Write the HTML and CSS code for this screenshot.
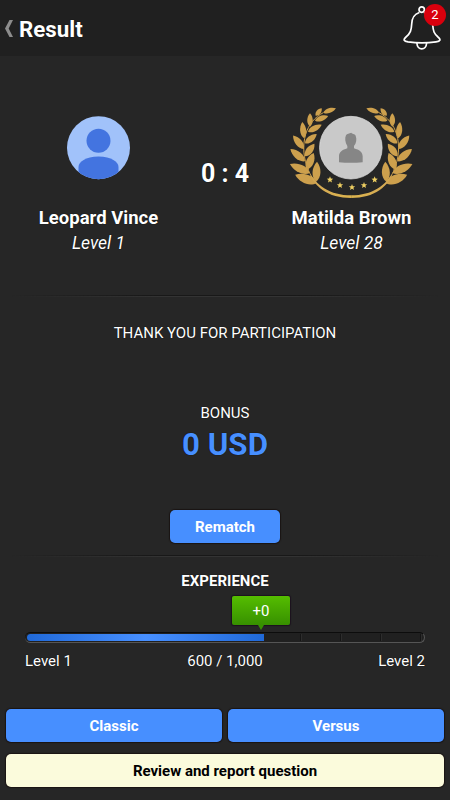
FILE: index.html
```html
<!DOCTYPE html>
<html lang="en">

<head>
    <meta charset="UTF-8">
    <meta name="viewport" content="width=device-width, initial-scale=1">
    <title>Result</title>
    <link rel="stylesheet" href="styles.css">
</head>

<body>
    <header class="header">
        <svg class="back" viewBox="0 0 9 18">
            <path d="M5.500 0H9L4.700 8.500 9 17H5.500L1 8.500z" fill="#8c8c8c"/>
        </svg>
        <h1 class="title">Result</h1>
        <div class="bell">
            <svg width="40" height="46" viewBox="0 0 40 46" fill="none" stroke="#fff" stroke-width="1.700">
                <circle cx="18.700" cy="5.600" r="2.700"/>
                <path d="M16.300 8.500C10 10.500 9 15 8.700 20C8.400 26 7.500 29.500 3 33C-.3 35.800 1 37.200 5 37.900C13 39.100 25 39.100 33 37.900C37.500 37.200 38.200 35.500 35 33C31 29.600 30.200 27 29.700 21C29.300 14.500 27 10.500 21 8.500"/>
                <path d="M13.900 39c.2 7.700 9.500 7.700 9.700 0"/>
            </svg>
            <span class="badge">2</span>
        </div>
    </header>

    <section class="players">
        <div class="player">
            <svg class="portrait" viewBox="0 0 145 110">
                <clipPath id="face"><circle cx="72.500" cy="52.700" r="31.500"/></clipPath>
                <g clip-path="url(#face)">
                    <path fill="#a1c2fa" d="M40 20h65v65H40z"/>
                    <circle cx="72.500" cy="45.800" r="12" fill="#4374e0"/>
                    <path fill="#4374e0" d="M52.500 90V72c0-5 7-10.500 20-10.500S92.500 67 92.500 72v18z"/>
                </g>
            </svg>
            <div class="name">Leopard Vince</div>
            <div class="level">Level 1</div>
        </div>
        <div class="score">0 : 4</div>
        <div class="player">
            <svg class="portrait" viewBox="-3 0 435 330">
                <defs>
                    <linearGradient id="gold" gradientUnits="userSpaceOnUse" x1="30" y1="0" x2="213" y2="0">
                        <stop offset="0" stop-color="#bd913f"/>
                        <stop offset=".45" stop-color="#d5aa54"/>
                        <stop offset="1" stop-color="#dcb44e"/>
                    </linearGradient>
                    <path id="leaf" d="M0 0C.22 -.62 .7 -.6 1 0C.7 .6 .22 .62 0 0z"/>
                    <path id="star" d="M0 -10 2.600 -3.400 9.500 -3 4.200 1.400 6 8.200 0 4.400 -6 8.200 -4.200 1.400 -9.500 -3 -2.600 -3.400z"/>
                    <g id="branch">
                        <g fill="#cda04d">
                            <use href="#leaf" transform="translate(130 53) rotate(-19) scale(40 16)"/>
                            <use href="#leaf" transform="translate(107 62) rotate(-51) scale(29 15)"/>
                            <use href="#leaf" transform="translate(105 77) rotate(-20) scale(42 17)"/>
                            <use href="#leaf" transform="translate(90 95) rotate(-90) scale(40 18)"/>
                            <use href="#leaf" transform="translate(84 110) rotate(-27) scale(46 19)"/>
                            <use href="#leaf" transform="translate(72 130) rotate(-96) scale(49 20)"/>
                            <use href="#leaf" transform="translate(75 145) rotate(-39) scale(45 20)"/>
                            <use href="#leaf" transform="translate(72 162) rotate(-129) scale(52 22)"/>
                            <use href="#leaf" transform="translate(75 184) rotate(-53) scale(47 22)"/>
                            <use href="#leaf" transform="translate(75 199) rotate(-140) scale(57 24)"/>
                            <use href="#leaf" transform="translate(80 224) rotate(-67) scale(54 25)"/>
                            <use href="#leaf" transform="translate(90 234) rotate(-156) scale(66 26)"/>
                            <use href="#leaf" transform="translate(108 260) rotate(-87) scale(60 26)"/>
                            <use href="#leaf" transform="translate(110 264) rotate(-159) scale(69 30)"/>
                        </g>
                        <path d="M130 53C105 66 86 88 77 118C67 152 70 191 86 226" fill="none" stroke="#c99c49" stroke-width="3"/>
                        <path d="M84 222C107 273 151 301 213.500 301V309C145 309 99 276 84 222z" fill="url(#gold)"/>
                    </g>
                </defs>
                <use href="#branch"/>
                <use href="#branch" transform="translate(427 0) scale(-1 1)"/>
                <g fill="#efcf62">
                    <use href="#star" x="150" y="254"/>
                    <use href="#star" x="180" y="271"/>
                    <use href="#star" x="216" y="277"/>
                    <use href="#star" x="252" y="271"/>
                    <use href="#star" x="284" y="254"/>
                </g>
                <circle cx="212.500" cy="158" r="94" fill="#c9c9c9" stroke="#e2e2e2" stroke-width="2"/>
                <path fill="#868686" d="M177 202V184C177 171 187 165 202 160V153C195 143 194 129 198 121C201 115 208 116 214 113C216 118 224 115 227 122C231 132 229 145 222 153V160C238 165 248 171 248 184V202Q212 205 177 202z"/>
            </svg>
            <div class="name">Matilda Brown</div>
            <div class="level">Level 28</div>
        </div>
    </section>

    <div class="line"></div>
    <p class="thanks">THANK YOU FOR PARTICIPATION</p>

    <section class="bonus">
        <div class="bonus-label">BONUS</div>
        <div class="bonus-value">0 USD</div>
        <button class="btn rematch">Rematch</button>
    </section>

    <div class="line"></div>
    <section class="experience">
        <h2 class="exp-title">EXPERIENCE</h2>
        <div class="track">
            <div class="fill" style="width: 60%">
                <span class="gain">+0</span>
            </div>
            <div class="ticks"></div>
        </div>
        <div class="exp-labels">
            <span>Level 1</span>
            <span>600 / 1,000</span>
            <span>Level 2</span>
        </div>
    </section>

    <footer class="actions">
        <button class="btn">Classic</button>
        <button class="btn">Versus</button>
        <button class="btn report">Review and report question</button>
    </footer>
</body>

</html>
```

FILE: styles.css
```css
* {
    box-sizing: border-box;
}

body {
    margin: 0;
    height: 800px;
    display: flex;
    flex-direction: column;
    overflow: hidden;
    background-color: #262626;
    color: #fff;
    font-family: Roboto, "Liberation Sans", sans-serif;
    font-size: 15px;
    text-shadow: 0 0 1px #000;
}

.header {
    height: 56px;
    flex: none;
    display: flex;
    align-items: center;
    padding: 2px 4px 0;
    background-color: #202020;
}

.back {
    width: 9px;
    height: 18px;
}

.title {
    flex: 1;
    margin: 0 0 0 6px;
    font-size: 22.300px;
    line-height: 28px;
    font-weight: 700;
}

.bell {
    position: relative;
    width: 43px;
    height: 46px;
    margin-bottom: 4px;
}

.bell svg {
    display: block;
}

.badge {
    position: absolute;
    top: 0;
    right: 0;
    width: 22px;
    height: 22px;
    border-radius: 50%;
    background-color: #d9000d;
    font-size: 13px;
    line-height: 22px;
    text-align: center;
    text-shadow: none;
}

.players {
    height: 239px;
    flex: none;
    display: flex;
    justify-content: space-between;
    padding: 39px 26px 0;
}

.player {
    width: 145px;
    text-align: center;
}

.portrait {
    display: block;
    width: 145px;
    height: 110px;
}

.name {
    margin-top: 1px;
    font-size: 18.500px;
    line-height: 24px;
    font-weight: 700;
    white-space: nowrap;
}

.level {
    font-size: 17.500px;
    line-height: 26px;
    font-style: italic;
}

.score {
    margin-top: 64px;
    font-size: 25px;
    line-height: 30px;
    font-weight: 700;
}

.line {
    height: 2px;
    flex: none;
    margin: 0 12px;
    background: linear-gradient(#181818 50%, #333 50%);
    -webkit-mask-image: linear-gradient(90deg, transparent, #000 35%, #000 65%, transparent);
    mask-image: linear-gradient(90deg, transparent, #000 35%, #000 65%, transparent);
}

.thanks {
    margin: 26px 0 0;
    line-height: 20px;
    text-align: center;
}

.bonus {
    height: 212px;
    flex: none;
    padding-top: 60px;
    display: flex;
    flex-direction: column;
    align-items: center;
}

.bonus-label {
    line-height: 20px;
}

.bonus-value {
    margin-top: 2px;
    color: #478fff;
    font-size: 31.300px;
    line-height: 40px;
    font-weight: 700;
}

.btn {
    height: 33px;
    padding: 0;
    border: none;
    border-radius: 5px;
    background-color: #478fff;
    box-shadow: 0 0 1px 1px #1a1413;
    color: #fff;
    font-family: inherit;
    font-size: 15px;
    font-weight: 700;
    cursor: pointer;
}

.rematch {
    width: 110px;
    margin-top: 45px;
}

.experience {
    padding: 14px 25px 0;
}

.exp-title {
    margin: 0;
    font-size: 15px;
    line-height: 20px;
    text-align: center;
}

.track {
    display: flex;
    height: 11px;
    margin-top: 41px;
    padding: 1px 2px;
    border-radius: 6px;
    background-color: #202020;
    border-top: 1px solid #0c0c0c;
    border-bottom: 1px solid #555;
    border-right: 1px solid #555;
}

.fill {
    position: relative;
    height: 7px;
    border-radius: 4px 0 0 4px;
    background: linear-gradient(90deg, #2069d8, #478fff 50%, #2069d8);
}

.ticks {
    flex: 1;
    background: repeating-linear-gradient(90deg, transparent 0 36px, #151515 36px 37px, #2d2d2d 37px 38px, transparent 38px 40px);
}

.gain {
    position: absolute;
    right: -26px;
    bottom: 16px;
    width: 58px;
    height: 29px;
    border-radius: 2px;
    background: linear-gradient(#55bd00, #379000);
    box-shadow: 0 0 1px 1px #1c121f;
    line-height: 30px;
    text-align: center;
    text-shadow: none;
}

.gain::after {
    content: "";
    position: absolute;
    top: 100%;
    left: 26px;
    border: 3px solid transparent;
    border-top: 5px solid #379000;
    border-bottom: 0;
}

.exp-labels {
    display: flex;
    justify-content: space-between;
    margin-top: 8px;
    line-height: 20px;
}

.actions {
    display: grid;
    grid-template-columns: 1fr 1fr;
    gap: 12px 6px;
    margin-top: auto;
    padding: 0 6px 13px;
}

.report {
    grid-column: 1 / 3;
    background-color: #fbfbdc;
    color: #000;
}
```
